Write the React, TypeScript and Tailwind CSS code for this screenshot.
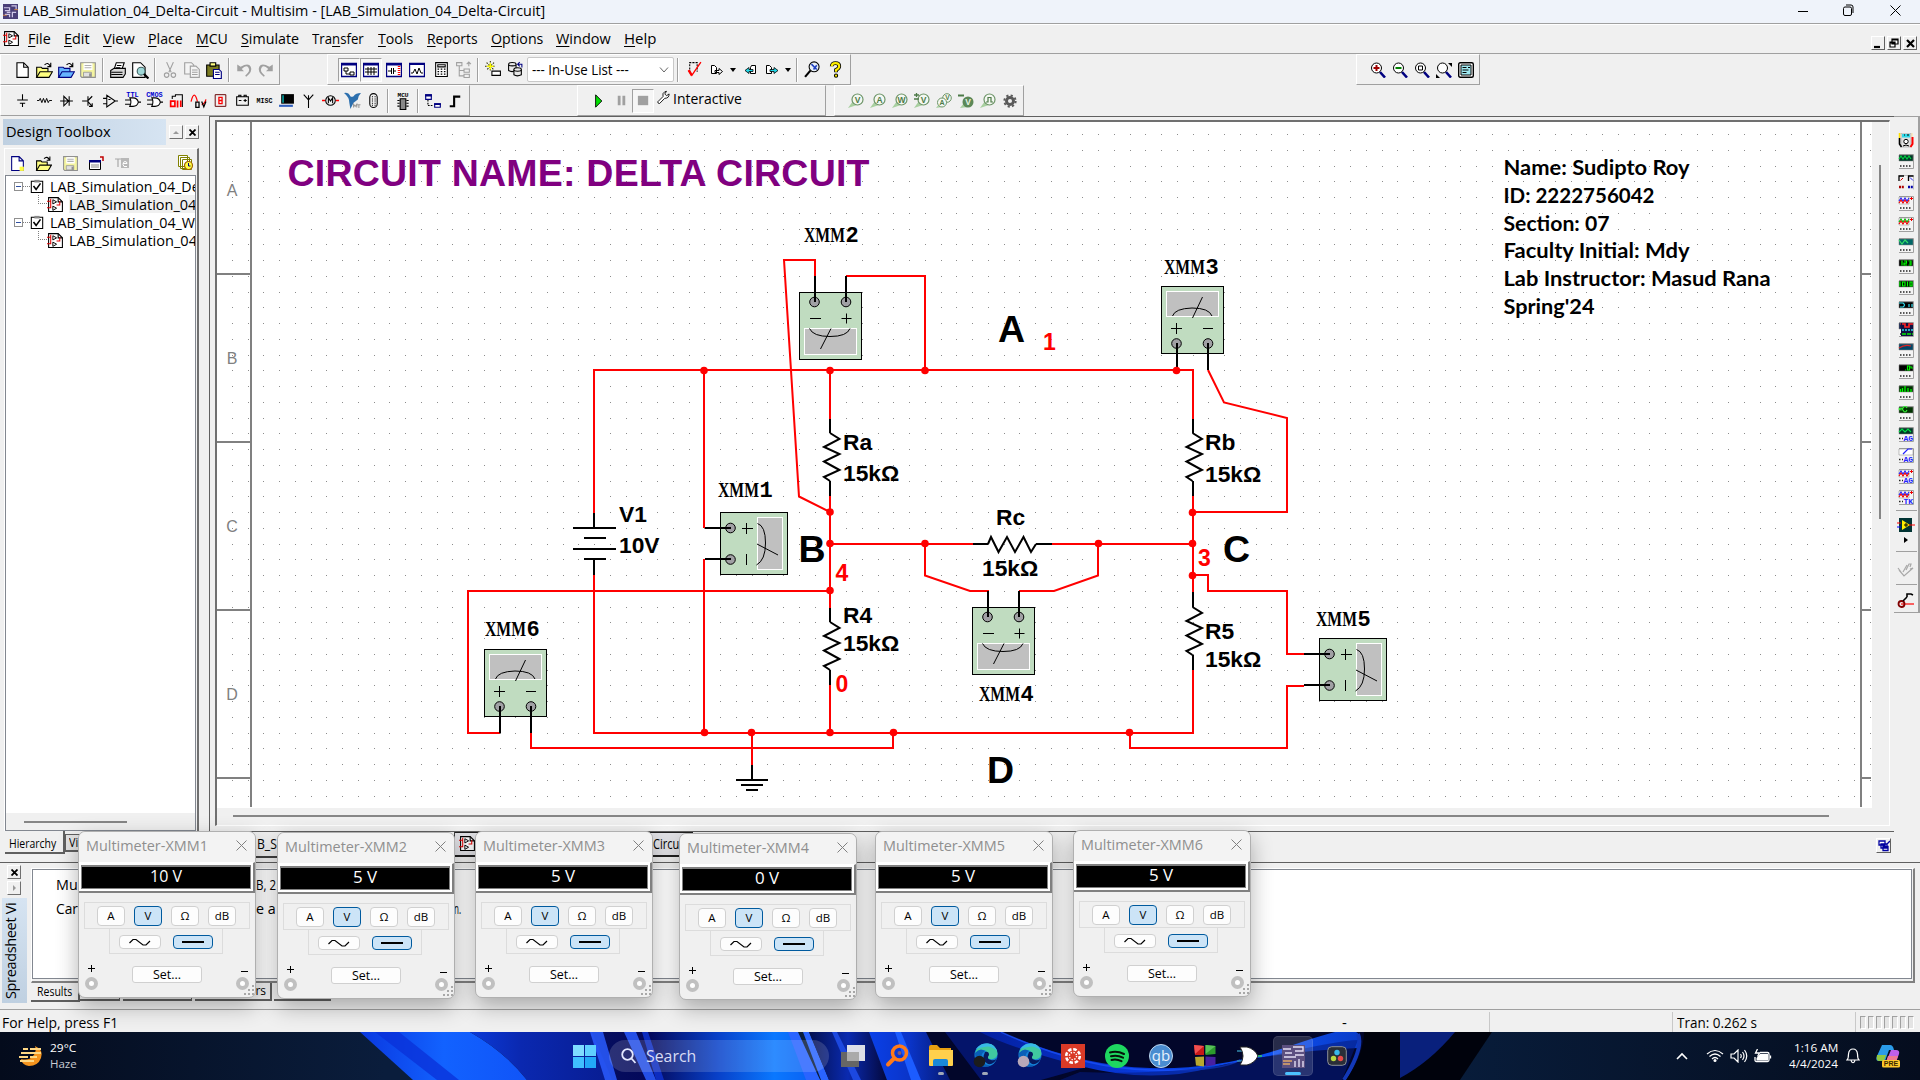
import React, { useLayoutEffect, useRef, useState } from "react";

/* Single-line text squeezed or stretched to a given pixel width */
function Fit({ w, className = "", children }: { w: number; className?: string; children: React.ReactNode }) {
  const ref = useRef<HTMLSpanElement>(null);
  const [scale, setScale] = useState(1);
  useLayoutEffect(() => {
    if (ref.current && ref.current.offsetWidth) setScale(w / ref.current.offsetWidth);
  }, [w]);
  return (
    <span className={"inline-block shrink-0 whitespace-nowrap " + className} style={{ width: w }}>
      <span ref={ref} className="inline-block origin-left" style={{ transform: `scaleX(${scale})` }}>
        {children}
      </span>
    </span>
  );
}

/* ---------- small toolbar glyphs, drawn on a 16 x 16 grid ---------- */
const K = "#000";
const N = "#000080";
const G = "#a0a0a0";
const folder = (c: string, s: string) => (
  <g fill={c} stroke={s}>
    <path d="M1.5 14.5v-9h4l1 1h5v3" />
    <path d="M1.5 14.5l3-5h11l-3 5z" />
    <path d="M8.500 3.500q3-3 5 1m-2.500.5h3v-3.500" fill="none" stroke={K} />
  </g>
);
const floppy = (c: string, s: string) => (
  <g>
    <path d="M1.500 1.500h13v13h-12l-1-1z" fill={c} stroke={s} />
    <path d="M4 2h8v6H4z" fill="#fff" />
    <path d="M5 4h6M5 6h6" stroke="#b0b0b0" />
    <path d="M4 10h7v4H4z" fill="#e0e0e0" stroke={s} strokeWidth=".7" />
    <path d="M9 11h2v3H9z" fill={s} />
  </g>
);
const loupe = (inner: React.ReactNode) => (
  <g>
    <path d="M10 10l5 5.500" stroke={N} strokeWidth="2.600" />
    <circle cx="6.500" cy="6" r="5" fill="#fff" stroke={K} strokeWidth="1" />
    {inner}
  </g>
);
const probe = (t: string, extra?: React.ReactNode) => (
  <g>
    <path d="M0 15l5-7 4 4z" fill="#a8cfa0" />
    <circle cx="9.500" cy="6.500" r="5.500" fill="#f4f8f2" stroke="#6d9468" strokeWidth="1.200" />
    <text x="9.500" y="9.800" fontSize="8.500" fontWeight="700" textAnchor="middle" fill="#4d7a48" fontFamily="Liberation Sans, sans-serif">{t}</text>
    {extra}
  </g>
);
const gate = <path d="M5.500 5.500h3q4 0 5 4q-1 4-5 4h-3q2-4 0-8zM1 7.500h5M1 11.500h5M13 9.500h3" fill="#fff" stroke={K} />;

const icons: Record<string, React.ReactNode> = {
  new: <path d="M3.500 1.500h6l4 4v9h-10zM9.500 1.500v4h4" fill="#fff" stroke={K} />,
  newY: <g><path d="M2.500 1.500h7l4 4v9h-11zM9.500 1.500v4h4" fill="#fff" stroke={N} /><path d="M10 11h4v4h-4z" fill="#ffff40" /></g>,
  open: folder("#ffff80", K),
  openB: folder("#66b5ff", N),
  save: floppy("#f4f4a0", "#909090"),
  print: <g><path d="M4.500 7.500l2-6h7l-2 6" fill="#fff" stroke={K} /><path d="M1.500 8.500l3-2h10v5l-2 3h-11z" fill="#d8d8d8" stroke={K} /><path d="M2 10h10M2 12h10M7 4h4M6 6h4" stroke={K} /></g>,
  preview: <g><path d="M1.500 1.500h7l4 4v9h-11z" fill="#fff" stroke={K} /><circle cx="9" cy="9" r="3.500" fill="#a0d8d8" stroke="#406060" /><path d="M11.500 11.500l4 4" stroke={K} strokeWidth="2" /></g>,
  cut: <g stroke={G} fill="none"><path d="M5 1l4 9M11 1l-4 9" /><circle cx="5" cy="12.500" r="2" /><circle cx="11" cy="12.500" r="2" /></g>,
  copy: <g stroke={G} fill="#f4f4f4"><path d="M1.500 1.500h6l2 2v8h-8z" /><path d="M6.500 4.500h5l3 3v7h-8zM8 8h5M8 10h5M8 12h5" /></g>,
  paste: <g><path d="M1.500 3.500h11v10h-11z" fill="#7b7b20" stroke={K} /><path d="M4.500 1.500h5v3h-5z" fill="#ffff80" stroke={K} /><path d="M7.500 7.500h5l2 2v6h-7z" fill="#fff" stroke={N} /><path d="M9 10h4M9 12h4" stroke={N} /></g>,
  undo: <path d="M2 3v6h6L6 7q4-4 6-1t-3 7l1 1q6-5 4-9T5 5z" fill={G} />,
  redo: <path d="M14 3v6H8l2-2Q6 3 4 6t3 7l-1 1Q0 9 2 5t9 0z" fill={G} />,
  win1: <g><path d="M.5 1.500h15v13H.5z" fill="#fff" stroke={N} strokeWidth="1.400" /><path d="M0 1h16v2.500H0z" fill={N} /><path d="M3 6h4v3H3zM9 10h4v3H9zM5 9v3h4" fill="none" stroke={K} /></g>,
  win2: <g><path d="M.5 1.500h15v13H.5z" fill="#fff" stroke={N} strokeWidth="1.400" /><path d="M0 1h16v2.500H0z" fill={N} /><path d="M2 7h12M2 10h12M5 5v8M8 5v8M11 5v8" stroke={K} /></g>,
  win3: <g><path d="M.5 1.500h15v13H.5z" fill="#fff" stroke={N} strokeWidth="1.400" /><path d="M0 1h16v2.500H0z" fill={N} /><path d="M2 9h3M5.500 6v6M7.500 6v6M8 9h2" stroke={K} /><path d="M13 4v10" stroke="red" strokeWidth="2.500" strokeDasharray="1 1" /></g>,
  win4: <g><path d="M.5 1.500h15v13H.5z" fill="#fff" stroke={N} strokeWidth="1.400" /><path d="M0 1h16v2H0z" fill={N} /><path d="M2 11h2l2-4 2 5 2-6 2 5h2" stroke={K} fill="none" /></g>,
  calc: <g><path d="M2.500 1.500h11v13h-11z" fill="#fff" stroke={K} /><path d="M4.500 3.500h7v2h-7z" stroke={K} /><path d="M5 7v7M8 7v7M11 7v7" stroke={K} strokeWidth="1.500" strokeDasharray="1.200 1.200" /></g>,
  tree: <g stroke={G} fill="none"><path d="M1.500 1.500h5v3h-5zM4 5v9h4M4 9h4M8.500 7.500h5v3h-5zM8.500 12.500h5v3h-5zM13 5V1M11 3l2-2 2 2" /></g>,
  wiz: <g><path d="M6.500 9.500h8v4h-8z" fill="#fff" stroke={K} /><path d="M5 0v10M0 5h10M1.500 1.500l7 7M8.500 1.500l-7 7" stroke="#303000" strokeDasharray="1.500 1" /><path d="M5 2v6M2 5h6" stroke="#ffff00" strokeWidth="1.500" /></g>,
  db: <g fill="#e8e8e8" stroke={K}><path d="M1.500 3v6q3 2 7 0V3" /><ellipse cx="5" cy="3" rx="3.500" ry="1.600" /><path d="M6.500 8v5q3 2 7 0V8" /><ellipse cx="10" cy="8" rx="3.500" ry="1.600" /><path d="M10 3h4v3M12 1l-2 2 2 2" stroke={N} fill="none" /></g>,
  erc: <g fill="none"><path d="M3.500 11V1.500h7V10" stroke={K} strokeDasharray="2 1" /><path d="M2.500 9l3 4.500L14 1" stroke="red" strokeWidth="1.300" /><path d="M2.500 8.500l3 5" stroke="red" strokeWidth="2.200" /></g>,
  fwd: <path d="M2.500 3.500h3l2 2v6h-5zM6 8.500h4v-2l3.500 3-3.500 3v-2H6z" fill="#fff" stroke={K} />,
  back: <g><path d="M9.500 3.500h4v8h-5v-6z" fill="#fff" stroke={K} /><path d="M11 7.500H7v-2l-4 3 4 3v-2h4z" fill="#20d8e8" stroke={K} strokeWidth=".8" /></g>,
  fwdB: <g><path d="M2.500 3.500h3l2 2v6h-5z" fill="#fff" stroke={K} /><path d="M6 7.500h4v-2l4 3-4 3v-2H6z" fill="#20d8e8" stroke={K} strokeWidth=".8" /></g>,
  find: <g><path d="M6 9l-5 6" stroke={K} strokeWidth="2" /><circle cx="9.500" cy="5.500" r="4.700" fill="#e8f0f8" stroke={K} /><path d="M7 3l5 5M12 4l-3 4" stroke="#2040c0" strokeWidth="1.500" /></g>,
  help: <g><path d="M4.500 5q0-3 3.500-3t3.500 3q0 2-3 3.500v2" fill="none" stroke={K} strokeWidth="3.600" /><path d="M4.500 5q0-3 3.500-3t3.500 3q0 2-3 3.500v1.500" fill="none" stroke="#ffee00" strokeWidth="2" /><circle cx="8.500" cy="13.800" r="1.500" fill="#ffee00" stroke={K} /></g>,
  src: <path d="M8 2v5M3 7.500h10M5.500 10.500h5M8 11v3" stroke={K} fill="none" />,
  res: <path d="M1 8h2l1-2 1.500 4L7 6l1.500 4L10 6l1.500 4 1-2H15" stroke={K} fill="none" strokeWidth=".9" />,
  diode: <path d="M2 8.500h12M5.500 4v9l4.500-4.500zM10.500 4v9" stroke={K} fill="none" />,
  bjt: <path d="M2 8.500h5M7.500 4v9M7.500 8l4-4M7.500 9l4 4.500M11.500 10.500v3h-3" stroke={K} fill="none" />,
  opamp: <path d="M4.500 3v11l8-5.500zM1 6h3M1 11h3M12 8.500h3M6 7h2" stroke={K} fill="none" />,
  ttl: <g>{gate}<text x="8" y="5" fontSize="6.500" fontWeight="700" textAnchor="middle" fill="#0000d0" fontFamily="Liberation Mono, monospace">TTL</text></g>,
  cmos: <g>{gate}<text x="8" y="5" fontSize="6.500" fontWeight="700" textAnchor="middle" fill="#0000d0" fontFamily="Liberation Mono, monospace">CMOS</text></g>,
  dig: <g><path d="M4 6.500V4h3V2.500h6.500V14" stroke={K} fill="none" /><path d="M2.500 8.500h4v5h-4zM9 8v6.500M12 8v6" stroke="red" strokeWidth="1.600" fill="none" /></g>,
  mixed: <g fill="none"><path d="M1 9q3-12 6 0M11 12q3-1 4-5" stroke="red" strokeWidth="1.200" /><path d="M5.500 9.500h3v5h-3zM11 9l2 5 2-5" stroke={K} strokeWidth="1.200" /></g>,
  ind: <g fill="none"><path d="M3 2.500h10v11H3z" stroke="#600" strokeWidth=".9" /><path d="M6.500 5h3v3h-3zM6.500 8h3v3h-3z" stroke="red" strokeWidth="1.200" /></g>,
  pow: <path d="M2.500 4.500h11v8h-11zM4.500 4V3h2v1M9.500 4V3h2v1M4.500 8h2.500M9 8h3M10.500 6.500v3" stroke={K} fill="none" />,
  misc: <text x="8" y="10.500" fontSize="7" fontWeight="700" textAnchor="middle" fill={K} fontFamily="Liberation Mono, monospace" textLength="15" lengthAdjust="spacingAndGlyphs">MISC</text>,
  periph: <g><path d="M3 2h12v9H3z" fill={K} /><path d="M4 3h1.500v7H4z" fill="#00a0a0" /><path d="M1 12h13v2H1z" fill="#3060c0" /></g>,
  rf: <path d="M8 15V3M3.500 2.500l4.500 5 4.500-5" stroke={K} fill="none" />,
  motor: <g fill="none"><path d="M0 8h3M13 8h3" stroke="red" strokeWidth="1.600" /><circle cx="8" cy="8" r="4.500" stroke={K} /><path d="M6 10.500v-5l2 3 2-3v5" stroke={K} /></g>,
  ni: <g><path d="M0 1q4-1 6 3 1 1 3 0 2-3 7-3-3 3-3 6l-4 3-3 6-1-6q0-5-5-9z" fill="#2c6fae" /><path d="M9 14.500v-3l1.500 2 1.500-2v3M14 12v3M12.500 12h3" stroke="#999" fill="none" /></g>,
  conn: <g fill="none" stroke={K}><rect x="4.500" y="1.500" width="7" height="13" rx="3.500" /><path d="M7 4v9M9.500 4v9" strokeDasharray="1 1" /></g>,
  mcu: <g><text x="8" y="4.500" fontSize="5.500" fontWeight="700" textAnchor="middle" fill={K} fontFamily="Liberation Mono, monospace">MCU</text><path d="M5.500 6h5v9.500h-5z" fill="#888" stroke={K} /><path d="M3 7.500h2M3 10h2M3 12.500h2M11 7.500h2M11 10h2M11 12.500h2" stroke={K} /></g>,
  hier: <g><path d="M1.500 2.500h5v4h-5zM9.500 10.500h5v3h-5z" fill="#fff" stroke={N} /><path d="M1 2h6v2H1zM9 10h6v1.500H9z" fill={N} /><path d="M3.500 7v5h5" fill="none" stroke={K} strokeDasharray="1.500 1" /></g>,
  bus: <path d="M2 14h5V3h7" stroke={K} strokeWidth="2.400" fill="none" />,
  play: <path d="M5 2.500v11l5.500-5.500z" fill="#00e000" stroke={K} strokeWidth=".8" />,
  pause: <path d="M4 3h3v10H4zM9 3h3v10H9z" fill={G} />,
  stop: <path d="M2 3h11v10H2z" fill={G} />,
  wrench: <path d="M2 13.500l6-6q-1-4 2-5.500l2-.5-2 3 2 2 3-2q0 5-5 5l-6 6q-2 0-2-2z" fill="#fff" stroke={K} />,
  pV: probe("V"),
  pA: probe("A"),
  pW: probe("W"),
  pVV: probe("V", <path d="M0 2h5M2.500 0v4M0 6h5" stroke="#4d7a48" strokeWidth="1.300" />),
  pAV: (
    <g>
      <path d="M0 15l3-4 3 3z" fill="#a8cfa0" />
      <circle cx="11" cy="5" r="4.300" fill="#f4f8f2" stroke="#6d9468" />
      <circle cx="6" cy="9.500" r="4.500" fill="#f4f8f2" stroke="#6d9468" />
      <text x="6" y="12.200" fontSize="7" fontWeight="700" textAnchor="middle" fill="#4d7a48" fontFamily="Liberation Sans, sans-serif">A</text>
      <text x="11.500" y="7" fontSize="6.500" fontWeight="700" textAnchor="middle" fill="#4d7a48" fontFamily="Liberation Sans, sans-serif">V</text>
    </g>
  ),
  pR: (
    <g>
      <path d="M2 15l4-5 4 4z" fill="#a8cfa0" />
      <circle cx="10" cy="9" r="5.500" fill="#5c8857" />
      <path d="M0 2.500h6" stroke="#4d7a48" strokeWidth="2" />
      <text x="10" y="12" fontSize="8.500" fontWeight="700" textAnchor="middle" fill="#e8f4e4" fontFamily="Liberation Sans, sans-serif">V</text>
    </g>
  ),
  pD: probe("", <path d="M6 9h2V4.500h3V9h2" fill="none" stroke="#4d7a48" strokeWidth="1.200" />),
  gear: <g><circle cx="8" cy="8" r="4" fill="none" stroke="#5a5a5a" strokeWidth="3.400" /><circle cx="8" cy="8" r="6.500" fill="none" stroke="#5a5a5a" strokeWidth="2.200" strokeDasharray="2.500 2.600" /></g>,
  zin: loupe(<path d="M3.500 6h6M6.500 3v6" stroke="#a00000" strokeWidth="2" />),
  zout: loupe(<path d="M3.500 6h6" stroke="#008000" strokeWidth="2" />),
  zarea: loupe(<path d="M4.500 4h4v4h-4z" stroke={K} fill="none" />),
  zfit: <g>{loupe(null)}<path d="M12 1h4v4zM0 12v4h4z" fill={K} /></g>,
  zfull: <g><rect x=".7" y=".7" width="14.600" height="14.600" rx="1.500" fill="#fff" stroke={K} strokeWidth="1.400" /><path d="M3 3h10v10H3z" fill="#9fe8f0" stroke={K} /><path d="M4.500 5.500h4M4.500 8h6M4.500 10.500h4M10 5.500h2" stroke={K} /></g>,
  sheet: <g><path d="M1.500 1.500h9l4 4v9h-13z" fill="#fff" stroke={K} /><path d="M10.500 1.500v4h4" fill="none" stroke={K} /><path d="M0 5h3.500V2.500M3.500 5v6H0M9 8.500h3V5" fill="none" stroke="#e00000" /><path d="M5.500 3.500v4l3.500-2zM5.500 9.500v4l3.500-2z" fill="#fff" stroke={K} strokeWidth=".9" /></g>,
  check: <g><path d="M1.500 2.500h13v13h-13z" fill="#fff" stroke={K} strokeWidth="1.200" /><path d="M5 1h6v3H5z" fill="#888" /><path d="M4 8l3 4 5-7" fill="none" stroke={K} strokeWidth="1.800" /></g>,
  rename: <g><path d="M1.500 5.500h11v9h-11z" fill="#fff" stroke={K} /><path d="M1 5h12v2.500H1z" fill={N} /><path d="M3 10h8M3 12h8" stroke="#888" /><path d="M15 6V2h-3" fill="none" stroke="#c00000" strokeWidth="1.500" /></g>,
  te: <g><path d="M7 3h8v10H7z" fill="#b8b8b8" /><path d="M1 4h6M4 4v8" fill="none" stroke="#a8a8a8" strokeWidth="1.200" /><path d="M9 8.500h4q0-2-2-2t-2 3 4 2" fill="none" stroke="#fff" /></g>,
  hist: <g fill="#fff" stroke="#808000"><path d="M.5.5h9v11h-9zM2.500 2.500h9v11h-9zM4.500 4.500h9v10h-9z" /><circle cx="10.500" cy="10.500" r="4" fill="#ffff40" stroke="#a06000" strokeWidth="1.200" /><path d="M10.500 8v3h2" stroke={N} fill="none" /></g>,
  app: <g><path d="M0 0h16v16H0z" fill="#4a3f78" /><path d="M1 4h6v3H2M9 2h5v4M2 11h5v3M10 14v-5h4M4 9h4" stroke="#cfc8e8" strokeWidth="1.300" fill="none" /><path d="M0 12h4M12 6h4" stroke="#d08040" /></g>,
};

function Ico({ n, s = 18 }: { n: string; s?: number }) {
  return <svg width={s} height={s} viewBox="0 0 16 16" fill="none" className="block shrink-0">{icons[n]}</svg>;
}
function Cell({ n, w = 22, s = 18, pressed = false }: { n: string; w?: number; s?: number; pressed?: boolean }) {
  return (
    <div className={"flex h-6 shrink-0 items-center justify-center " + (pressed ? "border border-[#a0a0a0] border-r-white border-b-white bg-[#f6f6f6]" : "")} style={{ width: w }}>
      <Ico n={n} s={s} />
    </div>
  );
}
const Sep = () => <div className="mx-[3px] h-6 w-[2px] shrink-0 border-l border-[#a0a0a0] bg-white" />;
const Caret = () => <div className="mx-[2px] h-0 w-0 shrink-0 border-x-[3.500px] border-t-[4px] border-x-transparent border-t-black" />;
const bar = "flex h-[31px] shrink-0 items-center border-t border-l border-r-[1.500px] border-b border-t-white border-l-white border-r-[#a0a0a0] border-b-[#a0a0a0]";

/* ---------- menus and toolbars ---------- */
const menus: [string, string, string, number, number][] = [
  ["", "F", "ile", 23, 13], ["", "E", "dit", 26, 13], ["", "V", "iew", 32, 13], ["", "P", "lace", 35, 13],
  ["", "M", "CU", 32, 13], ["", "S", "imulate", 58, 13], ["Tra", "n", "sfer", 52, 14], ["", "T", "ools", 35, 14],
  ["", "R", "eports", 51, 13], ["", "O", "ptions", 52, 13], ["", "W", "indow", 55, 13], ["", "H", "elp", 32, 0],
];

function Header() {
  return (
    <>
      <div className="flex h-6 shrink-0 items-center border-b border-[#a0a0a0] bg-[#eff3fa] pb-px text-[15px]">
        <div className="ml-[3px] mr-[5px]"><Ico n="app" s={15} /></div>
        <Fit w={522} className="-mt-px">LAB_Simulation_04_Delta-Circuit - Multisim - [LAB_Simulation_04_Delta-Circuit]</Fit>
        <div className="ml-auto flex items-center">
          <div className="mr-[35px] h-px w-[10px] bg-black" />
          <svg width="11" height="12" viewBox="0 0 11 12" fill="none" stroke="#000" className="-mt-[2px] mr-[36px] block"><rect x=".5" y="3" width="8" height="8.500" rx="1.500" /><path d="M3 1h5q2 0 2 2v6" /></svg>
          <svg width="11" height="11" viewBox="0 0 11 11" stroke="#000" className="-mt-px mr-[19px] block"><path d="M.5.5l10 10M10.500.5l-10 10" /></svg>
        </div>
      </div>
      <div className="flex h-[30px] shrink-0 items-center border-t border-b border-t-white border-b-[#a0a0a0] pb-[2px] text-[15px]">
        <div className="ml-[3px] mr-[8px]"><Ico n="sheet" s={17} /></div>
        {menus.map(([a, u, b, w, gap], i) => (
          <div key={i} className="flex shrink-0">
            <Fit w={w}>{a}<span className="underline underline-offset-2">{u}</span>{b}</Fit>
            <div style={{ width: gap }} />
          </div>
        ))}
        <div className="mt-[10px] ml-auto mr-[3px] flex gap-[2px]">
          {["M2 10h6", "M4 2h6v5H4zM4 3h6M2 5h5v5H2zM2 6h5", "M3 3l7 7M10 3l-7 7"].map((d, i) => (
            <div key={i} className="h-[14px] w-[14px] border border-r-[#606060] border-b-[#606060] border-t-white border-l-white bg-[#f0f0f0]">
              <svg width="12" height="12" viewBox="0 0 12 12" fill={i === 1 ? "#fff" : "none"} stroke="#000" strokeWidth={i === 1 ? 1.2 : 2.2}><path d={d} /></svg>
            </div>
          ))}
        </div>
      </div>
      <div className="flex h-[31px] shrink-0">
        <div className={bar + " w-[280px] pl-[10px]"}>
          <Cell n="new" /><Cell n="open" /><Cell n="openB" /><Cell n="save" /><Sep />
          <Cell n="print" /><Cell n="preview" /><Sep />
          <Cell n="cut" /><Cell n="copy" /><Cell n="paste" /><Sep />
          <Cell n="undo" /><Cell n="redo" />
        </div>
        <div className={bar + " ml-[47px] w-[524px] pl-[10px]"}>
          <Cell n="win1" pressed s={16} /><Cell n="win2" pressed s={16} /><Cell n="win3" w={23} s={16} /><Cell n="win4" w={24} s={16} /><Cell n="calc" w={24} s={17} /><Cell n="tree" w={21} s={17} /><Sep />
          <Cell n="wiz" s={17} /><Cell n="db" s={17} />
          <div className="ml-px flex h-[25px] w-[147px] shrink-0 items-center rounded-[2px] border border-[#c8c8c8] bg-white pl-[4px] text-[14.500px]">
            <Fit w={97}>--- In-Use List ---</Fit>
            <svg width="10" height="6" viewBox="0 0 10 6" fill="none" stroke="#666" className="ml-auto mr-[4px]"><path d="M1 .5l4 4.500 4-4.500" /></svg>
          </div>
          <Sep />
          <Cell n="erc" w={24} s={17} /><Cell n="fwd" w={22} s={16} /><Caret /><Cell n="back" w={23} s={16} /><Cell n="fwdB" w={22} s={16} /><Caret /><Sep />
          <Cell n="find" s={17} /><Cell n="help" w={24} s={17} />
        </div>
        <div className={bar + " ml-[505px] w-[124px] pl-[10px]"}>
          <Cell n="zin" s={16} /><Cell n="zout" s={16} /><Cell n="zarea" s={16} /><Cell n="zfit" s={16} /><Cell n="zfull" s={16} />
        </div>
      </div>
      <div className="flex h-[31px] shrink-0">
        <div className={bar + " w-[470px] pl-[10px]"}>
          {["src", "res", "diode", "bjt", "opamp", "ttl", "cmos", "dig", "mixed", "ind", "pow", "misc", "periph", "rf", "motor", "ni", "conn"].map((n) => (
            <Cell key={n} n={n} s={17} w={n === "conn" ? 21 : 22} />
          ))}
          <Sep /><Cell n="mcu" /><Sep /><Cell n="hier" /><Cell n="bus" s={14} />
        </div>
        <div className={bar + " ml-[107px] w-[249px] pl-[10px]"}>
          <Cell n="play" /><Cell n="pause" s={15} /><Cell n="stop" pressed s={15} />
          <div className="mb-2 ml-[2px]"><Ico n="wrench" s={14} /></div>
          <div className="mb-[5px] ml-[3px] text-[15px]"><Fit w={69}>Interactive</Fit></div>
        </div>
        <div className={bar + " ml-[8px] w-[190px] pl-[10px]"}>
          {["pV", "pA", "pW", "pVV", "pAV", "pR", "pD", "gear"].map((n) => <Cell key={n} n={n} s={n === "gear" ? 14 : 16} />)}
        </div>
      </div>
    </>
  );
}

/* ---------- design toolbox ---------- */
function TreeRow({ child = false, sel = false, text, w }: { child?: boolean; sel?: boolean; text: string; w: number }) {
  return (
    <div className="flex h-[18px] shrink-0 items-center overflow-hidden text-[15px]">
      {child ? (
        <div className="ml-[32px] h-full w-[9px] shrink-0"><div className="h-[9px] border-b border-l border-dotted border-[#808080]" /></div>
      ) : (
        <>
          <div className="ml-[8px] flex h-[9px] w-[9px] shrink-0 items-center justify-center border border-[#909090] bg-white"><div className="h-px w-[5px] bg-[#3050a0]" /></div>
          <div className="w-[7px] shrink-0 border-t border-dotted border-[#808080]" />
        </>
      )}
      <Ico n={child ? "sheet" : "check"} s={child ? 17 : 14} />
      <div className={(child ? "ml-[5px] " : "ml-[6px] ") + (sel ? "bg-[#f0f0f0]" : "")}><Fit w={w}>{text}</Fit></div>
    </div>
  );
}

function Toolbox() {
  return (
    <div className="flex w-[210px] shrink-0 flex-col border-r border-[#606060] pt-[3px]">
      <div className="flex w-[200px] shrink-0 items-center">
        <div className="ml-[3px] flex h-[26px] w-[163px] items-center bg-gradient-to-r from-[#bfd0e1] to-[#d6e4f2] pb-px pl-[3px] text-[15px]"><Fit w={105}>Design Toolbox</Fit></div>
        <div className="ml-[3px] flex h-[14px] w-[14px] items-center justify-center border border-t-white border-l-white border-r-[#707070] border-b-[#707070]"><div className="h-0 w-0 border-x-[3px] border-b-[3px] border-x-transparent border-b-[#999]" /></div>
        <div className="ml-[2px] flex h-[14px] w-[14px] items-center justify-center border border-t-white border-l-white border-r-[#707070] border-b-[#707070]"><svg width="7" height="7" viewBox="0 0 7 7" stroke="#000" strokeWidth="1.800"><path d="M.5.5l6 6M6.500.5l-6 6" /></svg></div>
      </div>
      <div className="ml-[4px] mt-[3px] flex w-[195px] grow flex-col border-t border-l border-r-2 border-t-white border-l-white border-r-[#707070]">
        <div className="flex h-[26px] shrink-0 items-center pl-[2px] pt-[2px]">
          <Cell n="newY" w={21} s={17} /><Cell n="open" w={31} s={17} /><Cell n="save" w={22} s={17} /><Cell n="rename" w={30} s={16} /><Cell n="te" w={22} s={16} /><div className="ml-auto mr-[3px]"><Ico n="hist" s={16} /></div>
        </div>
        <div className="flex h-[656px] w-[191px] flex-col overflow-hidden border border-[#828790] bg-white">
          <div className="h-px shrink-0" />
          <TreeRow text="LAB_Simulation_04_Delta" w={166} />
          <TreeRow child sel text="LAB_Simulation_04_Delta" w={169} />
          <TreeRow text="LAB_Simulation_04_Wye" w={160} />
          <TreeRow child text="LAB_Simulation_04_Wye" w={163} />
          <div className="mt-auto flex h-[17px] items-center bg-[#f0f0f0]"><div className="ml-[18px] h-[2px] w-[103px] bg-[#868686]" /></div>
        </div>
      </div>
      <div className="flex h-[31px] shrink-0 items-start pl-[5px] text-[12px]">
        <div className="flex h-[23px] w-[60px] items-center border-r-2 border-b-2 border-[#606060] bg-[#f0f0f0] pl-[4px] pt-1"><Fit w={47}>Hierarchy</Fit></div>
        <div className="mt-[3px] flex h-[18px] w-[60px] items-center border-b-2 border-t border-l border-[#606060] bg-[#e4e4e4] pl-[3px]"><Fit w={9}>Vi</Fit></div>
      </div>
    </div>
  );
}

/* ---------- schematic ---------- */
const gridDots = (() => {
  let d = "";
  for (let j = -6; j <= 36; j++)
    for (let i = -15; i <= 89; i++) d += `M${Math.floor(468.5 + 15.75 * i)} ${Math.floor(229 + 15.75 * j)}h1v1h-1z`;
  return d;
})();

const wires = [
  "M594 513V370H1193V419", "M594 575V733H1193V670", "M704 370V528", "M704 559V733",
  "M815 277V260H784L799 496.500L830 512", "M846 276H925V370", "M830 370V419M830 496V608M830 685V733",
  "M830 544H973M1052 544H1193", "M925 544V575.500L970 591H989", "M1019 591H1054L1098 575.500V544",
  "M500 733H468V591H830", "M531 733V748H893V733", "M752 733V765",
  "M1208 370L1224 402.500L1287 418V512H1193", "M1193 496V592",
  "M1193 575H1208V591H1287V654H1304", "M1304 686H1287V748H1130V733",
];
const leads = [
  "M594 513V528M573 528H616M584 538H606M573 549H616M584 559H606M594 559V575",
  "M830 419V433M830 481V496M830 608V622M830 670V685", "M1193 419V433M1193 481V496M1193 592V607M1193 655V670",
  "M973 544H988M1036 544H1052", "M752 765V780M736 780H768M741 785H763M746 790H758",
];
const nodes = [
  [704, 370.5], [830, 370.5], [925, 370.5], [1176.5, 370.5], [830, 512], [830, 543.5], [925, 543.5], [1098.5, 543.5], [1192.5, 543.5],
  [1192.5, 512.5], [1192.5, 575.5], [830, 590.5], [704.5, 732.5], [751.5, 732.5], [830, 732.5], [893.5, 732.5], [1129.5, 732.5],
];
const vZig = (x: number, y: number) => `M${x} ${y}l9.500 6l-15.500 8l15.500 7l-15.500 7.500l15.500 8.500l-15.500 7l6 4`;

function MeterUp({ x, y }: { x: number; y: number }) {
  return (
    <g transform={`translate(${x} ${y})`} stroke="#000" fill="none">
      <rect x=".5" y=".5" width="62" height="67" fill="#c0dcc0" />
      <rect x="5.500" y="5.500" width="52" height="25" fill="#c0c0c0" stroke="#fff" />
      <path d="M11.500 30Q14 22.500 31 22Q48 22 51 30M41.500 11L31.500 32" />
      <path d="M10 42.500h11M15.500 37v11M42 42.500h10" />
      <circle cx="15.500" cy="57.500" r="4.800" fill="#a0a0a4" /><circle cx="47" cy="57.500" r="4.800" fill="#a0a0a4" />
      <path d="M16 57v27M47 57v27" strokeWidth="2" />
    </g>
  );
}
function MeterDown({ x, y }: { x: number; y: number }) {
  return (
    <g transform={`translate(${x} ${y})`} stroke="#000" fill="none">
      <rect x=".5" y=".5" width="62" height="67" fill="#c0dcc0" />
      <rect x="5.500" y="36.500" width="52" height="26" fill="#c0c0c0" stroke="#fff" />
      <path d="M10.500 36.500Q14 44.500 31 44.500Q48 44.500 51 36.500M32 36.500L21.500 57" />
      <path d="M11 26.500h11M42.500 26.500h10M47.500 21.500v10" />
      <circle cx="15.500" cy="10" r="4.800" fill="#a0a0a4" /><circle cx="47" cy="10" r="4.800" fill="#a0a0a4" />
      <path d="M16 10v-26M47 10v-26" strokeWidth="2" />
    </g>
  );
}
function MeterSide({ x, y, lead }: { x: number; y: number; lead: number }) {
  return (
    <g transform={`translate(${x} ${y})`} stroke="#000" fill="none">
      <rect x=".5" y=".5" width="67" height="62" fill="#c0dcc0" />
      <rect x="37.500" y="5.500" width="25" height="52" fill="#c0c0c0" stroke="#fff" />
      <path d="M37.500 11.500Q45.500 14 45.500 31Q45.500 48 36.500 53M37 32L58 43" />
      <path d="M22 16.500h11M26.500 11v11M26.500 42v11" />
      <circle cx="10.500" cy="16" r="4.800" fill="#a0a0a4" /><circle cx="10.500" cy="47.500" r="4.800" fill="#a0a0a4" />
      <path d={`M${-lead} 16H11M${-lead} 47H11`} strokeWidth="2" />
    </g>
  );
}

const compLabels: [string, number, number][] = [
  ["Ra", 843, 450], ["15kΩ", 843, 481], ["Rb", 1205, 450], ["15kΩ", 1205, 481.5], ["Rc", 996, 525], ["15kΩ", 982, 575.5],
  ["R4", 843, 623], ["15kΩ", 843, 651], ["R5", 1205, 638.5], ["15kΩ", 1205, 666.5], ["V1", 619, 522], ["10V", 619, 553],
];
const xmmLabels: [string, number, number][] = [
  ["1", 718, 497], ["2", 804, 242], ["3", 1164, 273.5], ["4", 979, 700.5], ["5", 1316, 625.5], ["6", 485, 635.5],
];
const info: [string, number][] = [
  ["Name: Sudipto Roy", 186], ["ID: 2222756042", 151], ["Section: 07", 106], ["Faculty Initial: Mdy", 186], ["Lab Instructor: Masud Rana", 267], ["Spring'24", 91],
];

function Schematic() {
  return (
    <svg width="1655" height="686" viewBox="217 122 1655 686" className="block shrink-0 bg-white font-['Liberation_Sans',sans-serif]">
      <path d={gridDots} fill="#8c8c8c" shapeRendering="crispEdges" />
      <g fill="#808080" shapeRendering="crispEdges">
        <path d="M250 122h2v685h-2zM1860 122h2v685h-2z" />
        {[273, 441, 609, 777].map((y) => <path key={y} d={`M217 ${y}h33v2h-33zM1862 ${y}h9v2h-9z`} />)}
      </g>
      <g fill="#808080" fontSize="16" textAnchor="middle">
        <text x="232" y="195.500">A</text><text x="232" y="363.500">B</text><text x="232" y="531.500">C</text><text x="232" y="699.500">D</text>
      </g>
      <text x="287.500" y="186" fontSize="37.500" fontWeight="700" fill="#800080" textLength="582">CIRCUIT NAME: DELTA CIRCUIT</text>
      <g fontFamily="Lato, sans-serif" fontWeight="700" fontSize="20.500">
        {info.map(([t, w], i) => <text key={i} x="1503.500" y={175 + 27.8 * i} textLength={w} lengthAdjust="spacingAndGlyphs">{t}</text>)}
      </g>
      <g fill="none" stroke="#f00" strokeWidth="2">
        {wires.map((d) => <path key={d} d={d} />)}
      </g>
      <g fill="none" stroke="#000" strokeWidth="2">
        {leads.map((d) => <path key={d} d={d} />)}
        <path d={vZig(830, 433)} /><path d={vZig(830, 622)} /><path d={vZig(1192.5, 433)} /><path d={vZig(1192.5, 607)} />
        <path d="M988 544l3-7l7.500 15l8.500-15l8 15l8.500-15l7.500 15l5-8" />
      </g>
      <MeterSide x={720} y={512} lead={15} />
      <MeterSide x={1319} y={638} lead={15} />
      <MeterDown x={799} y={292} />
      <MeterDown x={972} y={607} />
      <MeterUp x={1161} y={286} />
      <MeterUp x={484} y={649} />
      <g fill="#f00">{nodes.map(([x, y]) => <circle key={`${x}-${y}`} cx={x} cy={y} r="3.800" />)}</g>
      <g fontWeight="700" fontSize="22.800">
        {compLabels.map(([t, x, y]) => <text key={t + x + y} x={x} y={y}>{t}</text>)}
      </g>
      {/* instrument tags: slab capitals with a monospaced index */}
      <g fontWeight="700" fontSize="20.500" fontFamily="Liberation Serif, serif">
        {xmmLabels.map(([t, x, y]) => (
          <text key={t} x={x} y={y}>
            <tspan textLength="41" lengthAdjust="spacingAndGlyphs">XMM</tspan>
            <tspan x={x + 41.500} fontFamily="Liberation Mono, monospace" fontSize="22">{t}</tspan>
          </text>
        ))}
      </g>
      <g fontWeight="700" fontSize="37.500">
        <text x="998" y="342">A</text><text x="798.500" y="562">B</text><text x="1223" y="562">C</text><text x="987" y="782.500">D</text>
      </g>
      <g fontWeight="700" fontSize="23" fill="#f00">
        <text x="1043" y="350">1</text><text x="1198" y="565.500">3</text><text x="835.500" y="581">4</text><text x="835.500" y="691.500">0</text>
      </g>
    </svg>
  );
}

function Workspace() {
  return (
    <div className="flex w-[1684px] shrink-0 flex-col border-t border-[#606060]">
      <div className="ml-[5px] mt-[3px] flex w-[1675px] flex-col border-t-2 border-l-2 border-r border-b border-t-[#707070] border-l-[#707070] border-r-white border-b-white">
        <div className="flex">
          <Schematic />
          <div className="flex w-4 flex-col items-center bg-[#f0f0f0]"><div className="mt-[43px] h-[354px] w-[2px] bg-[#868686]" /></div>
        </div>
        <div className="flex h-[17px] items-start bg-[#f0f0f0]"><div className="ml-[16px] mt-[7px] h-[2px] w-[1596px] bg-[#868686]" /></div>
      </div>
      <div className="mt-[5px] h-px w-full bg-[#606060]" />
      <div className="flex h-[30px] items-start text-[14px]">
        <div className="flex h-[26px] w-[245px] items-center border-r border-b-2 border-[#404040] pb-[2px] pl-[47px]"><Fit w={20}>B_S</Fit></div>
        <div className="flex h-[25px] w-[238px] items-center border-b-2 border-t border-r border-[#202020] bg-[#e2e2e6] pl-[4px] pb-px">
          <Ico n="sheet" s={17} /><span className="ml-auto mr-[13px]"><Fit w={26}>Circu</Fit></span>
        </div>
        <div className="ml-auto mr-[3px] mt-[6px] flex h-[15px] w-[15px] items-center justify-center border border-t-white border-l-white border-r-[#606060] border-b-[#606060]">
          <svg width="12" height="12" viewBox="0 0 12 12" fill="#fff" stroke="#0000a0" strokeWidth="1.300"><path d="M1 1h6v4H1zM3 4h6v4H3zM5 6.500h5v4H5zM9 4l3-3" /></svg>
        </div>
      </div>
    </div>
  );
}

/* ---------- instrument palette ---------- */
type Inst = { bg: string; fg: string; d: string; two?: string; dots?: boolean; t?: string };
const instruments: Inst[] = [
  { bg: "", fg: "", d: "" },
  { bg: "#003828", fg: "#00d040", d: "M1 5l2-3 2 3 2-3 2 3 2-3 2 3" },
  { bg: "", fg: "", d: "" },
  { bg: "#fff", fg: "#e00", d: "M1 7l2-3 2 3 2-3 2 3 2-3", two: "#22f", dots: true },
  { bg: "#fff", fg: "#e00", d: "M1 7l2-3 2 3 2-3 2 3 2-3", two: "#0b0", dots: true },
  { bg: "#066", fg: "#3d6", d: "M1 2l3 4 3-4 3 3" },
  { bg: "#000", fg: "#0f0", d: "M4 1.500v5M6 2h2.500v2.200H6V6h3M10.500 2H13v4h-2.500M11 4h2" },
  { bg: "#000", fg: "#0f0", d: "M2 1.500v5M4.500 2H7v4H4.500zM9.500 1.500v5M12 2h2v4h-2z" },
  { bg: "#000", fg: "#3de", d: "M1 2h4q3 2 0 4H2M11 3v3M14 3v3" },
  { bg: "#102050", fg: "#f22", d: "M2 2h4v3h4V2h5" },
  { bg: "#046", fg: "#d22", d: "M1 5q6-4 12-2" },
  { bg: "#000", fg: "#0e0", d: "M7 6h1M9.500 2h2v4h-2zM13 2v2h2" },
  { bg: "#030", fg: "#0f0", d: "M2.500 7V4M4.500 7V3M7 7V1M10 7V3M13 7V4" },
  { bg: "#030", fg: "#3e3", d: "M1 4q2-4 4 0t4 0M1 2q2 4 4 0t4 0" },
  { bg: "#003828", fg: "#0d4", d: "M1 5l3-3 3 3 3-3 3 3", t: "AG" },
  { bg: "#fff", fg: "#22f", d: "M5 6l5-5h4", t: "AG" },
  { bg: "#fff", fg: "#e00", d: "M1 7l2-3 2 3 2-3 2 3 2-3", two: "#22f", dots: true, t: "AG" },
  { bg: "#fff", fg: "#e00", d: "M1 7l2-3 2 3 2-3 2 3 2-3", two: "#22f", dots: true, t: "TK" },
];

function InstIcon({ m, i }: { m: Inst; i: number }) {
  if (i === 0)
    return (
      <svg width="16" height="15" viewBox="0 0 16 15" fill="none">
        <path d="M3 0h10v14H3z" fill="#e0e0e0" stroke="#a0a0a0" strokeWidth=".6" />
        <path d="M4 1h8v3.500H4z" fill="#30d8e8" /><path d="M6 2h1M9 2h2" stroke="#000" />
        <circle cx="8" cy="8.500" r="2.200" fill="#fff" stroke="#000" /><path d="M5 13l3-1 3 1" stroke="#000" />
        <path d="M1.500 0v5" stroke="#ffe000" strokeWidth="1.500" /><path d="M1.500 5v6l2 3" stroke="#000" strokeWidth="1.600" />
        <path d="M14.500 4v7l-2 3" stroke="#f00" strokeWidth="2" /><path d="M14 0v4" stroke="#ffe0a0" />
      </svg>
    );
  if (i === 2)
    return (
      <svg width="16" height="15" viewBox="0 0 16 15" fill="none">
        <path d="M1 .5h14.500v14" stroke="#c0c0c0" fill="#f4f4f4" />
        <path d="M1 6V1h5M10.500 6V1h5" stroke="#000" strokeWidth="1.300" />
        <path d="M2.500 5.500L5 3" stroke="#d00" /><path d="M12 2.500l3 3" stroke="#22f" />
        <path d="M1 12h5" stroke="#a00" strokeWidth="2.400" strokeDasharray="2 .8" /><path d="M10 12h5" stroke="#00a" strokeWidth="2.400" strokeDasharray="2 .8" />
      </svg>
    );
  return (
    <svg width="16" height="15" viewBox="0 0 16 15" fill="none">
      <path d="M1 .5h14.500v14H1" stroke="#a0a0a0" fill="#f4f4f4" />
      <path d={m.dots ? "M1 1h10v7H1z" : "M1 1h14v6H1z"} fill={m.bg} stroke="#808080" strokeWidth=".5" />
      {m.two && <path d="M1 5l2-3 2 3 2-3 2 3 2-3" stroke={m.two} strokeWidth="1.200" />}
      <path d={m.d} stroke={m.fg} strokeWidth="1.200" />
      {m.dots && <path d="M12 2.500h3M13.500 1v3" stroke="#e00" />}
      {m.t && <text x="5.500" y="14" fontSize="8" fontWeight="700" fill="#22f" fontFamily="Liberation Mono, monospace">{m.t}</text>}
      <path d={m.t ? "M1 11.500h4" : "M2 12h11"} stroke="#222" strokeWidth="1.600" strokeDasharray="1.500 1.500" />
      {i === 9 && <><path d="M3 1h12v13H3z" fill="#101040" /><path d="M4 2h3v3h4V2h4" stroke="#f22" strokeWidth="1.600" /><path d="M4 8h11" stroke="#3de" strokeWidth="1.400" strokeDasharray="2 1" /><path d="M4 12h11" stroke="#0e0" strokeWidth="1.600" strokeDasharray="4 1" /></>}
    </svg>
  );
}

function Palette() {
  return (
    <div className="flex w-[26px] shrink-0 flex-col">
      <div className="flex h-[497px] flex-col items-center border-t border-r-2 border-b border-[#a0a0a0] pt-[13px]">
        {instruments.map((m, i) => (
          <div key={i} className="flex h-[21px] shrink-0 items-center"><InstIcon m={m} i={i} /></div>
        ))}
        <div className="mt-[2px] h-px w-[21px] shrink-0 bg-[#a0a0a0]" />
        <svg width="18" height="16" viewBox="0 0 18 16" className="mt-[6px] shrink-0"><path d="M2 1h13v14H2z" fill="#033" /><path d="M5 3v10l8-5z" fill="#ffee00" /><path d="M7 8h4M9 6v4" stroke="#000" /><path d="M0 6h4M12 8h6" stroke="red" /><path d="M0 10h4" stroke="#00f" /></svg>
        <div className="mt-[4px] h-0 w-0 shrink-0 border-y-[3px] border-l-[4px] border-y-transparent border-l-black" />
        <div className="mt-[8px] h-px w-[21px] shrink-0 bg-[#a0a0a0]" />
        <svg width="18" height="16" viewBox="0 0 18 16" className="mt-[10px] shrink-0" fill="none" stroke="#a8a8a8"><path d="M2 8l5 6 9-8-3 1M6 10l4-7M9 8l3-6h2l-1 3M1 6l3 4" strokeWidth="1.200" /></svg>
        <div className="mt-[6px] h-px w-[21px] shrink-0 bg-[#a0a0a0]" />
        <svg width="18" height="16" viewBox="0 0 18 16" className="mt-[7px] shrink-0" fill="none"><path d="M4 12h13" stroke="red" strokeWidth="1.200" /><circle cx="4.500" cy="12" r="3" stroke="#800000" strokeWidth="1.800" /><path d="M6 9l4-4M10 5V2h4l2 1" stroke="#000" strokeWidth="1.600" /></svg>
      </div>
    </div>
  );
}

/* ---------- spreadsheet view ---------- */
function Spreadsheet() {
  return (
    <div className="flex h-[147px] shrink-0 border-t border-[#606060]">
      <div className="flex w-[31px] shrink-0 flex-col pl-[2px] pt-[2px]">
        <div className="ml-[5px] flex h-[14px] w-[14px] items-center justify-center border border-t-white border-l-white border-r-[#707070] border-b-[#707070]"><svg width="7" height="7" viewBox="0 0 7 7" stroke="#000" strokeWidth="1.800"><path d="M.5.5l6 6M6.500.5l-6 6" /></svg></div>
        <div className="ml-[5px] mt-[2px] flex h-[14px] w-[14px] items-center justify-center border border-t-white border-l-white border-r-[#707070] border-b-[#707070]"><div className="h-0 w-0 border-y-[3px] border-l-[3px] border-y-transparent border-l-[#999]" /></div>
        <div className="mt-[3px] h-[105px] w-[25px] overflow-hidden bg-gradient-to-b from-[#d6e4f2] to-[#bfd0e1]">
          <div className="flex h-[105px] w-[18px] rotate-180 items-start justify-start overflow-hidden pt-[4px] text-[14.500px] leading-[18px] tracking-[-0.35px] whitespace-nowrap [writing-mode:vertical-rl]">Spreadsheet Vi</div>
        </div>
      </div>
      <div className="flex grow flex-col pt-[5px]">
        <div className="h-[115px] w-[1884px] border-r-2 border-b-2 border-t border-l border-t-white border-l-white border-[#808080]">
          <div className="h-[110px] w-[1880px] border border-[#828790] bg-white pt-[2px] text-[15px] leading-[24px]">
            <div className="flex"><Fit w={22} className="ml-[23px]">Mu</Fit><Fit w={20} className="ml-[178px]">B, 2</Fit></div>
            <div className="flex"><Fit w={22} className="ml-[23px]">Car</Fit><Fit w={20} className="ml-[178px]">e a</Fit><Fit w={7} className="ml-[178px]">n.</Fit></div>
          </div>
        </div>
        <div className="flex items-start text-[12px]">
          <div className="flex h-[19px] w-[49px] items-center border-r-2 border-b-2 border-[#606060] pl-[6px]"><Fit w={35}>Results</Fit></div>
          <div className="h-[18px] w-[40px] border-b-2 border-r border-[#606060]" />
          <div className="ml-[3px] h-[18px] w-[69px] border-b-2 border-r border-[#606060]" />
          <div className="ml-[3px] flex h-[18px] w-[77px] items-center justify-end border-r-2 border-b-2 border-[#606060] pr-[4px]">rs</div>
          <div className="ml-[2px] h-[18px] w-[57px] border-b-2 border-[#606060]" />
        </div>
      </div>
    </div>
  );
}

function StatusBar() {
  return (
    <div className="flex h-[23px] shrink-0 items-center border-t border-[#a0a0a0] pt-[2px] text-[15px]">
      <Fit w={116} className="ml-[2px]">For Help, press F1</Fit>
      <div className="ml-[1224px] w-[147px]">-</div>
      <div className="h-5 w-[183px] border-l border-[#c8c8c8]" />
      <div className="flex h-5 w-[183px] items-center border-l border-[#c8c8c8] pl-[4px]"><Fit w={80}>Tran: 0.262 s</Fit></div>
      <div className="flex h-5 items-center gap-[2px] border-l border-[#c8c8c8] pl-[4px]">
        {[0, 1, 2, 3, 4, 5, 6].map((i) => <div key={i} className="h-[13px] w-[6px] border border-r-[#fff] border-b-[#fff] border-[#a0a0a0] bg-[#e4e4e4]" />)}
      </div>
    </div>
  );
}

/* ---------- floating multimeters ---------- */
const meters = [
  { n: "XMM1", v: "10 V", x: 78, y: 831 }, { n: "XMM2", v: "5 V", x: 277, y: 832 }, { n: "XMM3", v: "5 V", x: 475, y: 831 },
  { n: "XMM4", v: "0 V", x: 679, y: 833 }, { n: "XMM5", v: "5 V", x: 875, y: 831 }, { n: "XMM6", v: "5 V", x: 1073, y: 830 },
];
const off = "border-[#d0d0d0] bg-[#fdfdfd]";
const on = "border-[#005a9e] bg-[#cce4f7]";

function Multimeter({ n, v, x, y }: { n: string; v: string; x: number; y: number }) {
  return (
    <div className="absolute flex h-[167px] w-[178px] flex-col overflow-visible rounded-[7px] border border-[#b0b0b0] bg-[#f0f0f0] shadow-[0_8px_22px_rgba(0,0,0,0.3)]" style={{ left: x, top: y }}>
      <div className="flex h-[30px] shrink-0 items-center rounded-t-[7px] bg-[#f3f3f3] pb-[3px] pl-[7px] text-[15px] text-[#8f8f8f]">
        <Fit w={122}>Multimeter-{n}</Fit>
        <svg width="11" height="11" viewBox="0 0 11 11" stroke="#808080" className="ml-[28px]"><path d="M.5.5l10 10M10.500.5l-10 10" /></svg>
      </div>
      <div className="flex h-[31px] shrink-0 items-center justify-center border-r-2 border-b-2 border-t border-[#808080] border-t-white bg-white p-[2px]">
        <div className="flex h-full w-full items-center justify-center border border-t-2 border-[#808080] bg-black pb-[2px] text-[15.500px] text-white">
          <Fit w={v.length > 3 ? 32 : 24}>{v}</Fit>
        </div>
      </div>
      <div className="mx-auto mt-[9px] flex h-[27px] w-[166px] shrink-0 items-center border border-[#dcdcdc] pl-[12px] text-[11.500px]">
        {["A", "V", "Ω", "dB"].map((t, i) => (
          <div key={t} className={"mr-[9px] flex h-5 w-7 shrink-0 items-center justify-center rounded-[4px] border " + (i === 1 ? on : off)}>{t}</div>
        ))}
      </div>
      <div className="ml-[30px] flex h-[25px] w-[114px] shrink-0 border border-t-0 border-[#dcdcdc] pl-[9px] pt-[6px]">
        <div className={"flex h-[14px] w-[42px] items-center justify-center rounded-[4px] border " + off}>
          <svg width="22" height="8" viewBox="0 0 22 8" fill="none" stroke="#000" strokeWidth="1.200"><path d="M.5 5L4 1.500h3L14 7h3l4-4" /></svg>
        </div>
        <div className={"ml-[12px] flex h-[14px] w-10 justify-center rounded-[4px] border pt-[5px] " + on}><div className="h-[2px] w-[22px] bg-black" /></div>
      </div>
      <div className="mt-[9px] flex shrink-0 items-start justify-between pl-[5px] pr-[6px] text-[12px]">
        <div className="flex w-[14px] flex-col items-center pt-[2px]">
          <svg width="7" height="7" viewBox="0 0 7 7" stroke="#000"><path d="M0 3.500h7M3.500 0v7" /></svg>
          <div className="mt-[5px] h-[13px] w-[13px] rounded-full border-4 border-[#c0c0c0] bg-white" />
        </div>
        <div className={"mt-[3px] flex h-[17px] w-[70px] items-center justify-center rounded-[3px] border " + off}><Fit w={28}>Set...</Fit></div>
        <div className="flex w-[14px] flex-col items-center pt-[8px]">
          <div className="ml-[5px] h-px w-[7px] bg-black" />
          <div className="mt-[5px] h-[13px] w-[13px] rounded-full border-4 border-[#c0c0c0] bg-white" />
        </div>
      </div>
      <svg width="11" height="11" viewBox="0 0 11 11" fill="#a8a8a8" className="absolute right-0 bottom-[1px]"><path d="M8 0h2v2H8zM4 4h2v2H4zM8 4h2v2H8zM0 8h2v2H0zM4 8h2v2H4zM8 8h2v2H8z" /></svg>
    </div>
  );
}

/* ---------- taskbar ---------- */
function Grad({ id, stops }: { id: string; stops: [number, string][] }) {
  return <linearGradient id={id} x1="0" x2="1">{stops.map(([o, c]) => <stop key={o} offset={o} stopColor={c} />)}</linearGradient>;
}
function Wallpaper() {
  return (
    <svg width="1920" height="48" viewBox="0 0 1920 48" preserveAspectRatio="none" className="absolute inset-0 block">
      <defs>
        <Grad id="wNight" stops={[[0, "#040b1c"], [0.2, "#0a1d3c"], [1, "#0a1d3c"]]} />
        <Grad id="wPetal" stops={[[0, "#0a38e0"], [0.5, "#1262ff"], [1, "#1054f8"]]} />
        <Grad id="wMid" stops={[[0, "#0b3ad8"], [0.35, "#0a28b0"], [1, "#081c90"]]} />
        <Grad id="wCore" stops={[[0, "#060f60"], [0.25, "#04085a"], [0.55, "#0840c8"], [0.8, "#0a78ff"], [1, "#0a5cf0"]]} />
        <Grad id="wStripe" stops={[[0, "#04104e"], [0.5, "#0a2ab0"], [1, "#04083c"]]} />
        <Grad id="wRight" stops={[[0, "#0a40e8"], [0.5, "#0a34c8"], [1, "#061870"]]} />
        <Grad id="wRibbon" stops={[[0, "#0420a0"], [0.4, "#0838d8"], [0.75, "#0c50f4"], [1, "#0a3cc8"]]} />
        <Grad id="wEast" stops={[[0, "#081c3a"], [1, "#050d1e"]]} />
      </defs>
      <path d="M0 0h1920v48H0z" fill="url(#wNight)" />
      <path d="M360 0H470Q505 20 527 48H413z" fill="url(#wPetal)" />
      <path d="M375 0h24l60 48h-22z" fill="#0a30d8" opacity=".75" />
      <path d="M470 0h130l16 48h-89Q505 20 470 0z" fill="url(#wMid)" />
      <path d="M592 0h200l28 48H612z" fill="url(#wCore)" />
      <path d="M590 0h13l14 48h-12zM624 0h12l20 48h-10z" fill="#2a5cff" opacity=".85" />
      <path d="M642 0h6l16 48h-8z" fill="#0c2cc0" />
      <path d="M788 0h10l22 48h-14zM803 0h6l20 48h-8z" fill="#2a64ff" />
      <path d="M809 0h60l18 48h-58z" fill="url(#wStripe)" />
      <path d="M832 0h5l24 48h-8z" fill="#1c48e0" />
      <path d="M869 0h62l20 48h-64z" fill="url(#wRight)" />
      <path d="M895 0h6l20 48h-10z" fill="#1c5cff" />
      <path d="M926 0h440v48H950z" fill="#02062a" />
      <path d="M945 0h56q40 22 90 34l-50 14h-60z" fill="#04146a" />
      <path d="M1001 0Q1080 34 1150 36T1290 14 1356 0q8 4 2 16Q1270 20 1210 36T1080 34 980 0z" fill="url(#wRibbon)" />
      <path d="M1001 0Q1080 36 1150 38T1240 28" fill="none" stroke="#1c54ff" strokeWidth="1.500" opacity=".7" />
      <path d="M1080 40Q1180 44 1260 26T1358 8L1342 48H1060z" fill="#061c80" opacity=".55" />
      <path d="M1358 2q6 14-14 46" fill="none" stroke="#1238b8" strokeWidth="4" />
      <path d="M1364 0h130l-32 48H1346q18-26 18-48z" fill="#00020c" />
      <path d="M1400 0h55q-25 30-55 46z" fill="#0a2488" opacity=".9" />
      <path d="M1492 0h428v48H1460z" fill="url(#wEast)" />
    </svg>
  );
}

function Edge({ badge }: { badge: string }) {
  return (
    <svg width="26" height="26" viewBox="0 0 26 26">
      <circle cx="14" cy="12" r="11.500" fill="#1583d8" />
      <path d="M3 11Q5 1 15 .5 25 1 25.500 11q-1 6-8 5-4-1-2-4 0-5-5-5T3 11z" fill="#40c8a0" />
      <path d="M4 6Q9 0 16 .6 22 1 25 8q-6-6-13-4Q7 5 4 6z" fill="#38b8e8" />
      <path d="M3 10Q8 4 13 8q-5 3-3 9t9 5Q10 27 4 18z" fill="#0a5fb8" />
      <path d="M13 9q4-1 4 3-3 4 2 5 4 1 6-2-3 7-9 6-7-4-3-12z" fill="#061a60" />
      <circle cx="7.500" cy="18.500" r="5.800" fill={badge} />
    </svg>
  );
}

const tasks: { key: string; el: React.ReactNode; dot?: boolean; active?: boolean }[] = [
  { key: "view", el: <svg width="26" height="24" viewBox="0 0 26 24"><path d="M1 8h18v15H1z" fill="#666" /><path d="M7 1h18v16H7z" fill="#eee" opacity=".93" /><path d="M7 8h12v9H7z" fill="#aaa" /></svg> },
  { key: "seek", el: <svg width="24" height="24" viewBox="0 0 24 24" fill="none" stroke="#ff7a1a"><circle cx="14.500" cy="9" r="7" strokeWidth="3.500" /><circle cx="14.500" cy="9" r="2" fill="#ff7a1a" stroke="none" opacity=".5" /><path d="M9 14.500l-6 6" strokeWidth="4" strokeLinecap="round" /></svg> },
  { key: "files", dot: true, el: <svg width="26" height="24" viewBox="0 0 26 24"><path d="M1 3q0-2 2-2h6l3 3h11v6H1z" fill="#e8a010" /><path d="M1 6h24v15q0 1-1 1H2q-1 0-1-1z" fill="#ffd04c" /><path d="M5 22v-5q0-2 2-2h11q2 0 2 2v5z" fill="#1a88d8" /></svg> },
  { key: "edge1", dot: true, el: <Edge badge="#1c1c1c" /> },
  { key: "edge2", el: <Edge badge="#b8a8b8" /> },
  { key: "lms", el: <svg width="24" height="24" viewBox="0 0 24 24"><path d="M0 0h24v24H0z" fill="#d93a27" /><circle cx="12" cy="12" r="6.800" fill="none" stroke="#fff" strokeWidth="2.600" strokeDasharray="3.600 1.740" /><circle cx="12" cy="12" r="3.600" fill="none" stroke="#fff" strokeWidth="1.400" strokeDasharray="1.400 1.427" /></svg> },
  { key: "music", el: <svg width="24" height="24" viewBox="0 0 24 24"><circle cx="12" cy="12" r="12" fill="#1ed760" /><path d="M5 8.500q7-2 14 1.500M6 12.300q6-1.700 12 1.400M6.500 16q5-1.400 10 1.200" fill="none" stroke="#06140a" strokeWidth="2" strokeLinecap="round" /></svg> },
  { key: "qb", el: <div className="flex h-6 w-6 items-center justify-center rounded-full border border-[#c0d8f0] bg-[#4a8cd0] pb-[2px] text-[15px] leading-none text-[#e8f2fc]">qb</div> },
  { key: "cubes", el: <svg width="24" height="24" viewBox="0 0 24 24"><path d="M1 1l10 1v9H2z" fill="#c81818" /><path d="M1 1l10 1-9 8z" fill="#f05050" /><path d="M12.500 1l10 1v8l-10 1z" fill="#2c9a2c" /><path d="M12.500 1l10 1-10 8z" fill="#58c058" /><path d="M2 13l9-.5v10l-8-1z" fill="#b8a830" /><path d="M12.500 12.500l10 .5v8l-10 1.500z" fill="#4820a0" /></svg> },
  { key: "gate", el: <svg width="26" height="22" viewBox="0 0 26 22"><path d="M1 6h6M1 16h6" stroke="#38a" strokeWidth="1.300" /><path d="M4 2h7q8 2 11 9-3 7-11 9H4q6-9 0-18z" fill="#fff" stroke="#222" /><path d="M22 11h4" stroke="#3c6" strokeWidth="1.500" /></svg> },
  { key: "sim", active: true, el: <svg width="23" height="23" viewBox="0 0 23 23"><path d="M0 0h23v23H0z" fill="#5c5080" /><path d="M1 4h8M3 8h7M11 2h10v4h-8M2 12h12M13 22v-6M17 22v-8M21 22v-6M13 10h9" stroke="#e4def4" strokeWidth="1.400" fill="none" /><path d="M1 16h9M1 19h7" stroke="#e0a868" strokeWidth="1.300" /></svg> },
  { key: "grade", el: <svg width="20" height="20" viewBox="0 0 20 20"><rect x=".7" y=".7" width="18.600" height="18.600" rx="4" fill="#2a2e38" stroke="#8c9098" /><circle cx="10" cy="6.500" r="2.700" fill="#38b8e8" /><circle cx="6.500" cy="12.500" r="2.700" fill="#b8d840" /><circle cx="13.500" cy="12.500" r="2.700" fill="#e84848" /></svg> },
];

function Taskbar() {
  return (
    <div className="relative flex h-12 shrink-0 overflow-hidden bg-[#071226] text-white">
      <Wallpaper />
      <div className="relative flex h-12 w-full items-center">
        <div className="ml-[18px] flex w-[553px] items-center">
          <svg width="26" height="24" viewBox="0 0 26 24"><path d="M17 2q9 4 6 12t-12 8q-7-1-8-7 8 2 12-3t2-10z" fill="#f5941e" /><path d="M5 5h5M12 5h11M3 9h20M1 13h9M12 13h7M2 17h14" stroke="#ffd884" strokeWidth="2" /></svg>
          <div className="ml-[6px] flex flex-col text-[11.500px] leading-4"><Fit w={26}>29°C</Fit><Fit w={27} className="text-[#c8ccd4]">Haze</Fit></div>
        </div>
        <div className="grid w-[25px] shrink-0 grid-cols-2 gap-px pl-[2px]">
          {["bg-[#7fdcff]", "bg-[#5fd0ff]", "bg-[#40c0ff]", "bg-[#22a8f8]"].map((c) => <div key={c} className={"h-[11px] " + c} />)}
        </div>
        <div className="ml-[13px] flex h-8 w-[220px] items-center rounded-full bg-white/15 pl-[12px] text-[16.500px] text-[#d8dcf4]">
          <svg width="15" height="16" viewBox="0 0 15 16" fill="none" stroke="#e4e8ff" strokeWidth="1.800"><circle cx="6.500" cy="6.500" r="5.300" /><path d="M10.500 10.500l4 4.500" /></svg>
          <Fit w={50} className="ml-[10px]">Search</Fit>
        </div>
        <div className="ml-[2px] flex">
          {tasks.map((t) => (
            <div key={t.key} className="relative flex h-12 w-11 items-center justify-center">
              <div className={"flex h-10 w-10 items-center justify-center rounded-[5px] " + (t.active ? "border border-white/10 bg-white/15" : "")}>{t.el}</div>
              {t.dot && <div className="absolute bottom-[5px] h-[3px] w-[6px] rounded-full bg-[#a0a8b8]" />}
              {t.active && <div className="absolute bottom-[5px] h-[3px] w-4 rounded-full bg-[#4cc2ff]" />}
            </div>
          ))}
        </div>
        <div className="ml-auto mr-[20px] flex items-center">
          <svg width="12" height="8" viewBox="0 0 12 8" fill="none" stroke="#fff" strokeWidth="1.600"><path d="M1 7l5-5 5 5" /></svg>
          <svg width="18" height="14" viewBox="0 0 18 14" fill="none" stroke="#fff" strokeWidth="1.200" className="ml-[18px]"><path d="M1 5q8-7 16 0M3.500 7.500q5.500-5 11 0M6 10q3-3 6 0" /><circle cx="9" cy="11.500" r="1.500" fill="#fff" stroke="none" /></svg>
          <svg width="18" height="14" viewBox="0 0 18 14" fill="none" stroke="#fff" strokeWidth="1.200" className="ml-[6px]"><path d="M1 5h3l4-4v12L4 9H1zM10.500 5q1.500 2 0 4M12.500 3q3 4 0 8M14.500 1q4.500 6 0 12" /></svg>
          <svg width="18" height="14" viewBox="0 0 18 14" fill="none" stroke="#fff" strokeWidth="1.300" className="ml-[6px]"><path d="M6 3.500h7.500q1.500 0 1.500 1.500v6q0 1.500-1.500 1.500h-11Q1 12.500 1 11V8" /><path d="M6 5h8v6.500H2.500V9z" fill="#fff" stroke="none" /><path d="M16.500 6.500v3M3.500 0L1.500 4h4L3.500 7.500" /></svg>
          <div className="ml-[14px] flex w-[52px] flex-col items-end text-[11.500px] leading-4"><Fit w={44}>1:16 AM</Fit><Fit w={49}>4/4/2024</Fit></div>
          <svg width="14" height="16" viewBox="0 0 14 16" fill="none" stroke="#fff" strokeWidth="1.200" className="ml-[8px]"><path d="M1 12q1.500-1.500 1.500-6 .5-5 4.500-5t4.500 5q0 4.500 1.500 6zM5 12.500q2 4.500 4 0" /></svg>
          <svg width="24" height="24" viewBox="0 0 24 24" className="ml-[16px]">
            <path d="M6 1h8q3 0 4 5h-5L9 17H3q-4 0-2-5z" fill="#2a9be8" /><path d="M1 11h9l-2 6H3q-3 0-2-6z" fill="#90c840" />
            <path d="M15 6h5q4 0 3 4l-3 8H10z" fill="#c060e8" /><path d="M12 12h10l-2 6H10z" fill="#f07890" />
            <rect x="6" y="16" width="18" height="7.500" rx="1.500" fill="#ffc82c" /><text x="15" y="22.300" fontSize="7" fontWeight="700" textAnchor="middle" fill="#3a2a00" fontFamily="Liberation Sans, sans-serif">PRE</text>
          </svg>
        </div>
      </div>
    </div>
  );
}

export default function App() {
  return (
    <div className="relative flex h-[1080px] w-[1920px] flex-col overflow-hidden bg-[#f0f0f0] font-['Open_Sans','Noto_Sans',sans-serif] text-black">
      <Header />
      <div className="flex h-[746px] shrink-0">
        <Toolbox />
        <Workspace />
        <Palette />
      </div>
      <div className="flex h-[170px] shrink-0 flex-col">
        <Spreadsheet />
        <StatusBar />
      </div>
      {meters.map((m) => <Multimeter key={m.n} {...m} />)}
      <div className="relative"><Taskbar /></div>
    </div>
  );
}
